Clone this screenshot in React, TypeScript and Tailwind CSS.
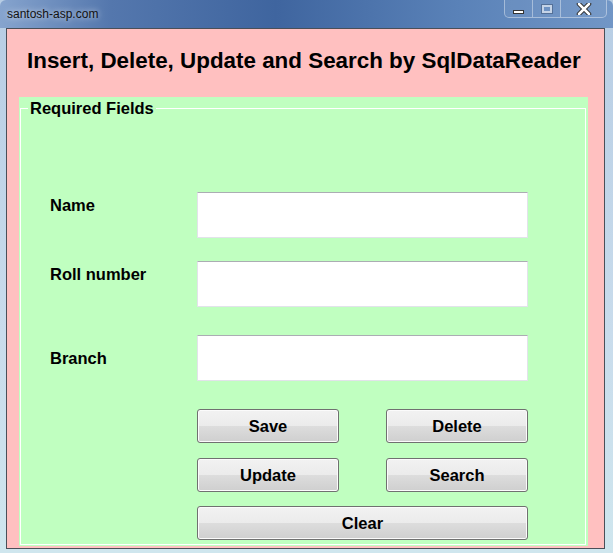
const winBtn =
  "h-full flex items-center justify-center border-white/40";

const grayBtn =
  "h-[34px] w-[142px] rounded-[3px] border border-[#707070] bg-[linear-gradient(#f2f2f2_0%,#ebebeb_50%,#dddddd_50%,#cfcfcf_100%)] shadow-[inset_0_0_0_1px_#fbfbfb] text-[16.5px] leading-[19px] font-bold text-black";

const fields = [
  { label: "Name", rowGap: "mt-0", labelTop: "mt-[4px]" },
  { label: "Roll number", rowGap: "mt-[23px]", labelTop: "mt-[4px]" },
  { label: "Branch", rowGap: "mt-[28px]", labelTop: "mt-[14px]" },
];

export default function App() {
  return (
    <div className="w-[613px] h-[553px] overflow-hidden bg-[linear-gradient(180deg,#b7cde4_0%,#c9dcec_60%,#cfe6ee_100%)] font-['Liberation_Sans',Arial,sans-serif] flex flex-col">
      {/* title bar */}
      <div className="h-[28px] shrink-0 flex items-start bg-[linear-gradient(90deg,#86a4ce_0%,#5477ad_18%,#3f659f_45%,#5a82b8_75%,#7196c6_100%)] rounded-t-[6px]">
        <span className="ml-[7px] mt-[6px] text-[12px] leading-[16px] text-[#111] [text-shadow:0_0_6px_rgba(255,255,255,0.8)]">
          santosh-asp.com
        </span>
        <div className="ml-auto mr-[6px] h-[18px] flex rounded-b-[5px] border border-t-0 border-white/40 bg-white/5 overflow-hidden">
          <div className={`${winBtn} w-[28px] border-r`}>
            <div className="mt-[6px] w-[11px] h-[4px] bg-white border border-[#333]" />
          </div>
          <div className={`${winBtn} w-[28px] border-r`}>
            <div className="w-[10px] h-[8px] border-[2px] border-white/60 shadow-[0_0_0_1px_rgba(60,80,110,0.5)]" />
          </div>
          <div className={`${winBtn} w-[45px]`}>
            <svg width="16" height="12" viewBox="0 0 16 12">
              <path d="M3 1 L13 11 M13 1 L3 11" stroke="#2b2b2b" strokeWidth="4.5" strokeLinecap="round" />
              <path d="M3 1 L13 11 M13 1 L3 11" stroke="#ffffff" strokeWidth="2.5" strokeLinecap="round" />
            </svg>
          </div>
        </div>
      </div>

      {/* client area */}
      <div className="ml-[6px] w-[599px] h-[521px] border border-[#4a4f58] bg-[#ffc0c0] flex flex-col">
        <h1 className="ml-[20px] pt-[19px] h-[68px] text-[22.4px] leading-[26px] font-bold text-black">
          Insert, Delete, Update and Search by SqlDataReader
        </h1>

        {/* group box */}
        <div className="relative ml-[12px] w-[569px] h-[449px] bg-[#c0ffc0] pt-[11px] pl-[1px] pr-[2px] pb-[1px]">
          <span className="absolute left-[9px] top-[2px] px-[2px] bg-[#c0ffc0] text-[16.5px] leading-[19px] font-bold text-black">
            Required Fields
          </span>
          <div className="h-full border border-white pl-[29px] pt-[83px] flex flex-col">
            {fields.map((f) => (
              <div key={f.label} className={`flex ${f.rowGap}`}>
                <div className={`w-[147px] ${f.labelTop} text-[16.5px] leading-[19px] font-bold text-black`}>
                  {f.label}
                </div>
                <input
                  type="text"
                  className="w-[331px] h-[46px] bg-white border border-[#e2e3ea] border-t-[#abadb3] outline-none"
                />
              </div>
            ))}

            <div className="ml-[147px] mt-[28px] flex gap-[47px]">
              <button className={`${grayBtn} border-[#3c7fb1] shadow-[inset_0_0_0_1px_#dff2fc]`}>Save</button>
              <button className={grayBtn}>Delete</button>
            </div>
            <div className="ml-[147px] mt-[15px] flex gap-[47px]">
              <button className={grayBtn}>Update</button>
              <button className={grayBtn}>Search</button>
            </div>
            <div className="ml-[147px] mt-[14px] flex">
              <button className={`${grayBtn} w-[331px] h-[32px]`}>Clear</button>
            </div>
          </div>
        </div>
      </div>
    </div>
  );
}
